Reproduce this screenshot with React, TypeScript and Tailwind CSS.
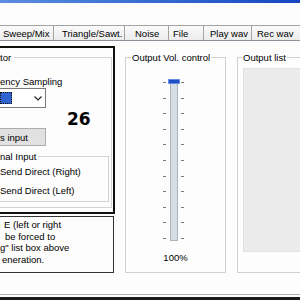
import React from 'react'

const tabs = [
  { label: 'Sweep/Mix', w: 'w-[54px]', pl: 'pl-[3px]' },
  { label: 'Triangle/Sawt.', w: 'w-[71px]', pl: 'pl-[8px]' },
  { label: 'Noise', w: 'w-[44px]', pl: 'pl-[10px]' },
  { label: 'File', w: 'w-[35px]', pl: 'pl-[4px]' },
  { label: 'Play wav', w: 'w-[48px]', pl: 'pl-[6px]' },
  { label: 'Rec wav', w: 'w-[56px]', pl: 'pl-[5px]' },
]

const ticks = Array.from({ length: 11 })

function TickColumn() {
  return (
    <div className="flex flex-col justify-between w-[3px] h-full pt-[3px] pb-[2px]">
      {ticks.map((_, i) => (
        <div key={i} className="h-px w-[3px] bg-[#7a7a7a]" />
      ))}
    </div>
  )
}

export default function App() {
  return (
    <div className="w-[300px] h-[300px] overflow-hidden bg-[#fdfdfd] flex flex-col font-['Liberation_Sans',Arial,sans-serif] text-[9.5px] leading-[11px] text-black">
      {/* title bar */}
      <div className="h-[3px] bg-gradient-to-r from-[#5b8ee0] to-[#1746c0]" />
      <div className="h-[22px]" />

      {/* tabs */}
      <div className="flex h-[15px]">
        {tabs.map((t) => (
          <div
            key={t.label}
            className={`${t.w} ${t.pl} shrink-0 flex items-center border-t border-r border-[#a3a3a3] bg-gradient-to-b from-[#fafafa] to-[#ececec]`}
          >
            <span className="whitespace-nowrap">{t.label}</span>
          </div>
        ))}
      </div>

      {/* tab page */}
      <div className="flex-1 border-t border-[#8d9199] flex items-start">
        {/* left column */}
        <div className="w-[115px] shrink-0">
          <div className="mt-[5px] h-[168px] border-2 border-l-0 border-[#111]">
            <fieldset className="mt-[4px] mr-[1px] h-[156px] border border-l-0 border-[#d3d3d3]">
              <legend className="pr-[3px]">tor</legend>
              <div className="mt-[13px] whitespace-nowrap">ency Sampling</div>
              <div className="mt-px w-[46px] h-[20px] border border-l-0 border-[#7a7a7a] bg-white flex items-center">
                <div className="w-[12px] h-[12px] bg-[#2f63cf] border border-dotted border-[#111]" />
                <svg className="ml-auto mr-[3px]" width="8" height="5" viewBox="0 0 8 5">
                  <polyline points="0.5,0.5 4,4 7.5,0.5" fill="none" stroke="#222" strokeWidth="1.2" />
                </svg>
              </div>
              <div className="mt-[3px] ml-[67px] h-[17px] leading-[17px] text-[17px] font-bold font-['DejaVu_Sans',sans-serif]">26</div>
              <div className="w-[46px] h-[18px] border border-l-0 border-[#adadad] bg-[#e1e1e1] flex items-center">
                <span className="whitespace-nowrap">s input</span>
              </div>
              <fieldset className="mt-[5px] mr-[2px] border border-l-0 border-[#d3d3d3] pb-[5px]">
                <legend className="pr-[2px]">nal Input</legend>
                <div className="mt-[4px] whitespace-nowrap">Send Direct (Right)</div>
                <div className="mt-[8px] whitespace-nowrap">Send Direct (Left)</div>
              </fieldset>
            </fieldset>
          </div>
          <div className="mt-[2px] w-[114px] h-[57px] border border-l-0 border-[#333] pt-[2px] leading-[11.5px] whitespace-nowrap">
            <div className="pl-[4px]">E (left or right</div>
            <div className="pl-[5px]">be forced to</div>
            <div>g" list box above</div>
            <div className="pl-[2px]">eneration.</div>
          </div>
        </div>

        {/* output volume */}
        <fieldset className="ml-[10px] mt-[11px] w-[101px] h-[221px] shrink-0 border border-[#d0d0d0]">
          <legend className="ml-[5px] px-[1px] whitespace-nowrap">Output Vol. control</legend>
          <div className="mt-[16px] ml-[37px] h-[162px] flex">
            <TickColumn />
            <div className="relative ml-[4px] w-[8px] h-full bg-[#d6dde3] border border-[#aab3bc]">
              <div className="absolute -top-px -left-[3px] w-[12px] h-[5px] bg-[#1d4fc4] border border-[#6a8fe0]" />
            </div>
            <div className="ml-[3px] h-full">
              <TickColumn />
            </div>
          </div>
          <div className="mt-[11px] text-center">100%</div>
        </fieldset>

        {/* output list */}
        <fieldset className="ml-[11px] mt-[11px] w-[80px] h-[221px] shrink-0 border border-[#d0d0d0]">
          <legend className="ml-[4px] px-[1px] whitespace-nowrap">Output list</legend>
          <div className="mt-[5px] ml-[5px] h-[184px] bg-[#ebebeb] border border-[#e2e2e2]" />
        </fieldset>
      </div>

      {/* window bottom */}
      <div className="h-px bg-[#b0b0b0]" />
      <div className="h-[2px]" />
      <div className="h-[3px] bg-[#1a1a1a]" />
    </div>
  )
}
